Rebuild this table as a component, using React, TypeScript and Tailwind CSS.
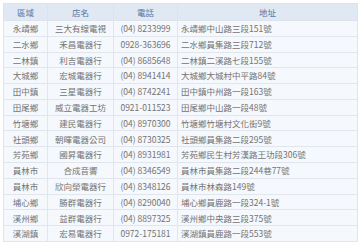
import React from "react";

const rows: [string, string, string, string][] = [
  ["永靖鄉", "三大有線電視", "(04) 8233999", "永靖鄉中山路三段151號"],
  ["二水鄉", "禾昌電器行", "0928-363696", "二水鄉員集路三段712號"],
  ["二林鎮", "利吉電器行", "(04) 8685648", "二林鎮二溪路七段155號"],
  ["大城鄉", "宏城電器行", "(04) 8941414", "大城鄉大城村中平路84號"],
  ["田中鎮", "三星電器行", "(04) 8742241", "田中鎮中州路一段163號"],
  ["田尾鄉", "威立電器工坊", "0921-011523", "田尾鄉中山路一段48號"],
  ["竹塘鄉", "建民電器行", "(04) 8970300", "竹塘鄉竹塘村文化街9號"],
  ["社頭鄉", "朝暉電器公司", "(04) 8730325", "社頭鄉員集路二段295號"],
  ["芳苑鄉", "國昇電器行", "(04) 8931981", "芳苑鄉民生村芳漢路王功段306號"],
  ["員林市", "合成音響", "(04) 8346549", "員林市員集路二段244巷77號"],
  ["員林市", "欣向榮電器行", "(04) 8348126", "員林市林森路149號"],
  ["埔心鄉", "勝群電器行", "(04) 8290040", "埔心鄉員鹿路一段324-1號"],
  ["溪州鄉", "益群電器行", "(04) 8897325", "溪州鄉中央路三段375號"],
  ["溪湖鎮", "宏易電器行", "0972-175181", "溪湖鎮員鹿路一段553號"],
];

export default function App() {
  return (
    <div
      className="w-[360px] h-[244px] bg-white p-[3px] overflow-hidden"
      style={{ fontFamily: '"Noto Sans CJK TC", "Noto Sans", sans-serif' }}
    >
      <table className="w-[354px] border-collapse table-fixed text-[8.5px] leading-none text-[#737373]">
        <colgroup>
          <col className="w-[44px]" />
          <col className="w-[66px]" />
          <col className="w-[64px]" />
          <col className="w-[180px]" />
        </colgroup>
        <thead>
          <tr className="h-[17px] bg-[#dfe8f3] text-[#5577a8]">
            <th className="border border-[#dde3ea] font-normal text-center">區域</th>
            <th className="border border-[#dde3ea] font-normal text-center">店名</th>
            <th className="border border-[#dde3ea] font-normal text-center">電話</th>
            <th className="border border-[#dde3ea] font-normal text-center">地址</th>
          </tr>
        </thead>
        <tbody>
          {rows.map((r, i) => (
            <tr key={i} className="h-[15.79px] bg-[#f5f8fc]">
              <td className="border border-[#e1e6ed] text-center">{r[0]}</td>
              <td className="border border-[#e1e6ed] text-center">{r[1]}</td>
              <td className="border border-[#e1e6ed] text-center">{r[2]}</td>
              <td className="border border-[#e1e6ed] text-left pl-[3px]">{r[3]}</td>
            </tr>
          ))}
        </tbody>
      </table>
    </div>
  );
}
